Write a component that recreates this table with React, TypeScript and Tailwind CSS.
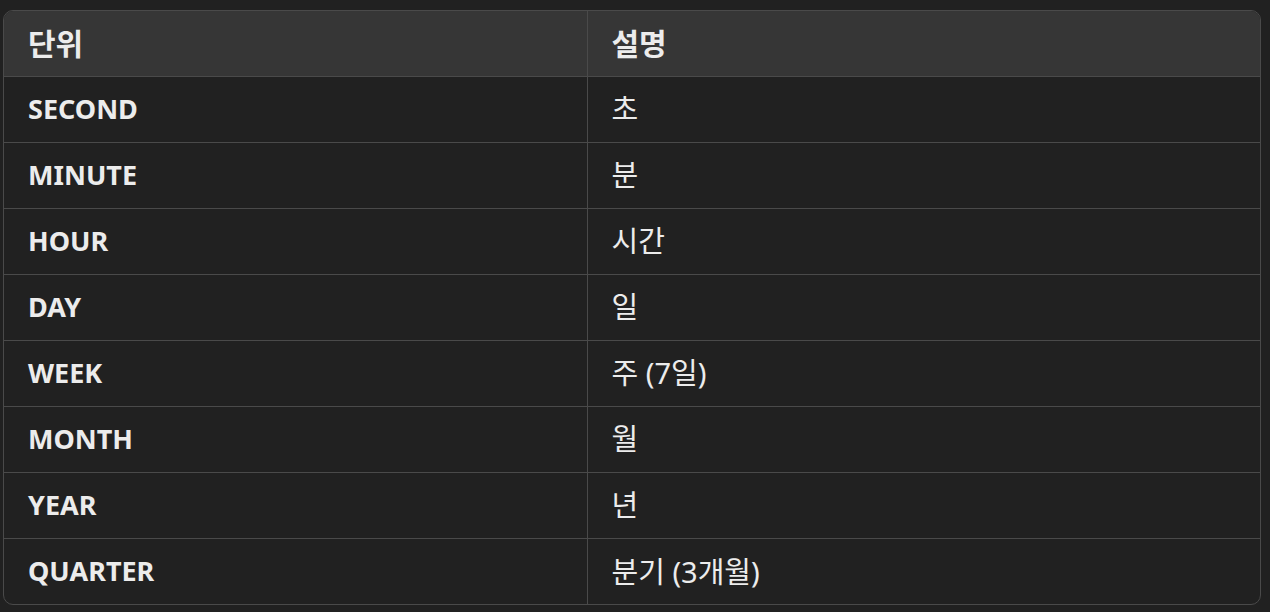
import React from 'react';

const rows = [
  { unit: 'SECOND', desc: '초' },
  { unit: 'MINUTE', desc: '분' },
  { unit: 'HOUR', desc: '시간' },
  { unit: 'DAY', desc: '일' },
  { unit: 'WEEK', desc: '주 (7일)' },
  { unit: 'MONTH', desc: '월' },
  { unit: 'YEAR', desc: '년' },
  { unit: 'QUARTER', desc: '분기 (3개월)' },
];

export default function App() {
  return (
    <div
      className="min-h-[612px] w-[1270px] bg-[#212121] pl-[3px] pt-[10px]"
      style={{ fontFamily: '"Noto Sans", "Noto Sans CJK KR", sans-serif' }}
    >
      <div className="w-[1258px] overflow-hidden rounded-[10px] border border-[#4a4a4a]">
        <table className="w-full border-collapse text-[27px] text-[#ececec]">
          <thead>
            <tr className="h-[65px] bg-[#363636]">
              <th className="w-[583px] border-r border-[#4a4a4a] pl-6 text-left text-[30px] font-bold">단위</th>
              <th className="pl-6 text-left text-[30px] font-bold">설명</th>
            </tr>
          </thead>
          <tbody>
            {rows.map(r => (
              <tr key={r.unit} className="h-[66px] border-t border-[#4a4a4a]">
                <td className="border-r border-[#4a4a4a] pl-6 font-bold">{r.unit}</td>
                <td className="pl-6 text-[29px]">{r.desc}</td>
              </tr>
            ))}
          </tbody>
        </table>
      </div>
    </div>
  );
}
